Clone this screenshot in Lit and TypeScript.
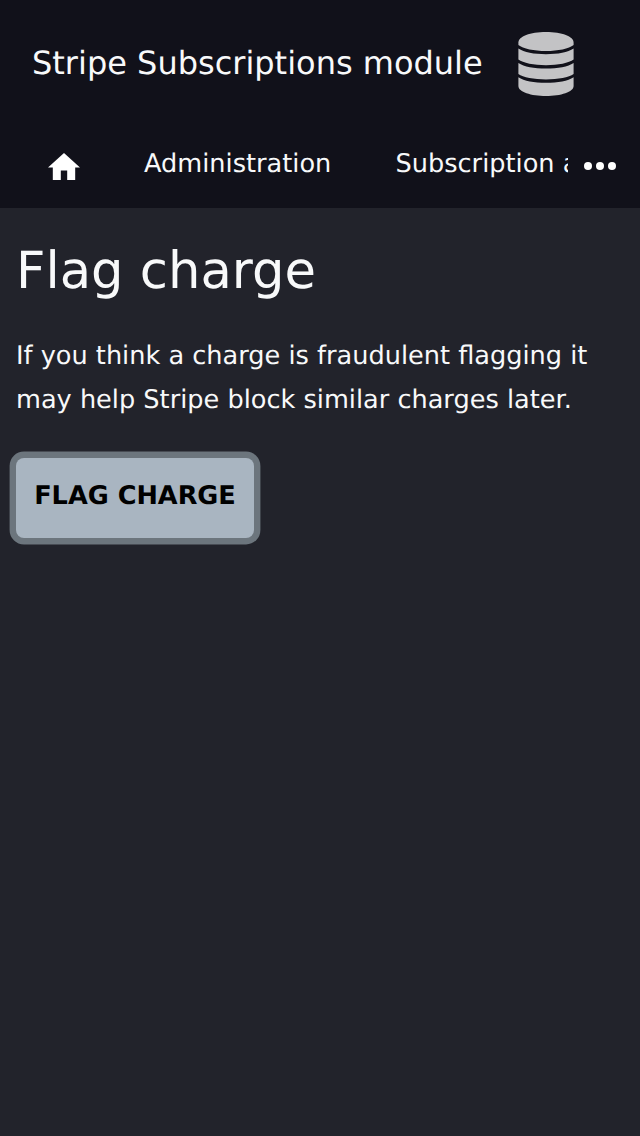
import { LitElement, html, css } from "lit";
import { customElement } from "lit/decorators.js";

@customElement("app-root")
export class AppRoot extends LitElement {
  static styles = css`
    :host {
      display: block;
      min-height: 1136px;
      background: #22232b;
      color: #f8f9fa;
      font-family: "DejaVu Sans", sans-serif;
      font-size: 25.6px;
      overflow: hidden;
      text-rendering: geometricPrecision;
    }
    header {
      background: #11111a;
      height: 208px;
    }
    .brand {
      display: flex;
      align-items: center;
      height: 128px;
      padding-left: 32px;
      gap: 32px;
      font-size: 32px;
      white-space: nowrap;
    }
    .title { width: 450px; padding-bottom: 2px; }
    .brand svg { width: 64px; height: 64px; display: block; }
    nav {
      display: flex;
      height: 80px;
      align-items: center;
      white-space: nowrap;
    }
    .home { width: 32px; height: 27.2px; margin: 0 64px 3.2px 48px; flex: none; }
    .admin { width: 187.5px; flex: none; margin-right: 64px; padding-bottom: 8px; }
    .sub { width: 172.5px; flex: none; overflow: hidden; padding-bottom: 8px; }
    .more { width: 32px; height: 8px; margin: -4px 0 0 16px; flex: none; }
    main { padding: 32px 16px; }
    h1 { margin: 0; font-weight: 400; font-size: 51.2px; line-height: 62px; }
    p { margin: 32px 0 0; font-size: 25.6px; line-height: 44px; }
    button {
      display: block;
      margin: 36px 0 0;
      width: 238px;
      height: 80px;
      padding: 0 0 4px;
      border: 0;
      border-radius: 8px;
      background: #a9b5c1;
      box-shadow: 0 0 0 6.4px #6c757d;
      color: #000;
      font: bold 25.6px "DejaVu Sans", sans-serif;
      text-rendering: inherit;
    }
  `;

  render() {
    return html`
      <header>
        <div class="brand">
          <span class="title">Stripe Subscriptions module</span>
          <svg viewBox="0 0 64 64" fill="#c3c3c5">
            <path d="M4.4 10.5C4.4 4.5 16 0 32 0S59.6 4.5 59.6 10.5V13C55 16.8 44 19 32 19S9 16.8 4.4 13Z" />
            <path d="M4.4 16.5C10 20.4 20 22.2 32 22.2S54 20.4 59.6 16.5V27.5C55 31 44 33.2 32 33.2S9 31 4.4 27.5Z" />
            <path d="M4.4 31C10 34.8 20 36.6 32 36.6S54 34.8 59.6 31V42C55 45.4 44 47.4 32 47.4S9 45.4 4.4 42Z" />
            <path d="M4.4 45.2C10 49 20 50.8 32 50.8S54 49 59.6 45.2V54C59.6 60 47 64 32 64S4.4 60 4.4 54Z" />
          </svg>
        </div>
        <nav>
          <svg class="home" viewBox="2 3 20 17" fill="#fff">
            <path d="M10 20v-6h4v6h5v-8h3L12 3 2 12h3v8z" />
          </svg>
          <span class="admin">Administration</span>
          <span class="sub">Subscription admin</span>
          <svg class="more" viewBox="0 0 32 8" fill="#fff">
            <circle cx="4" cy="4" r="4" /><circle cx="16" cy="4" r="4" /><circle cx="28" cy="4" r="4" />
          </svg>
        </nav>
      </header>
      <main>
        <h1>Flag charge</h1>
        <p>If you think a charge is fraudulent flagging it may help Stripe block similar charges later.</p>
        <button>FLAG CHARGE</button>
      </main>
    `;
  }
}
